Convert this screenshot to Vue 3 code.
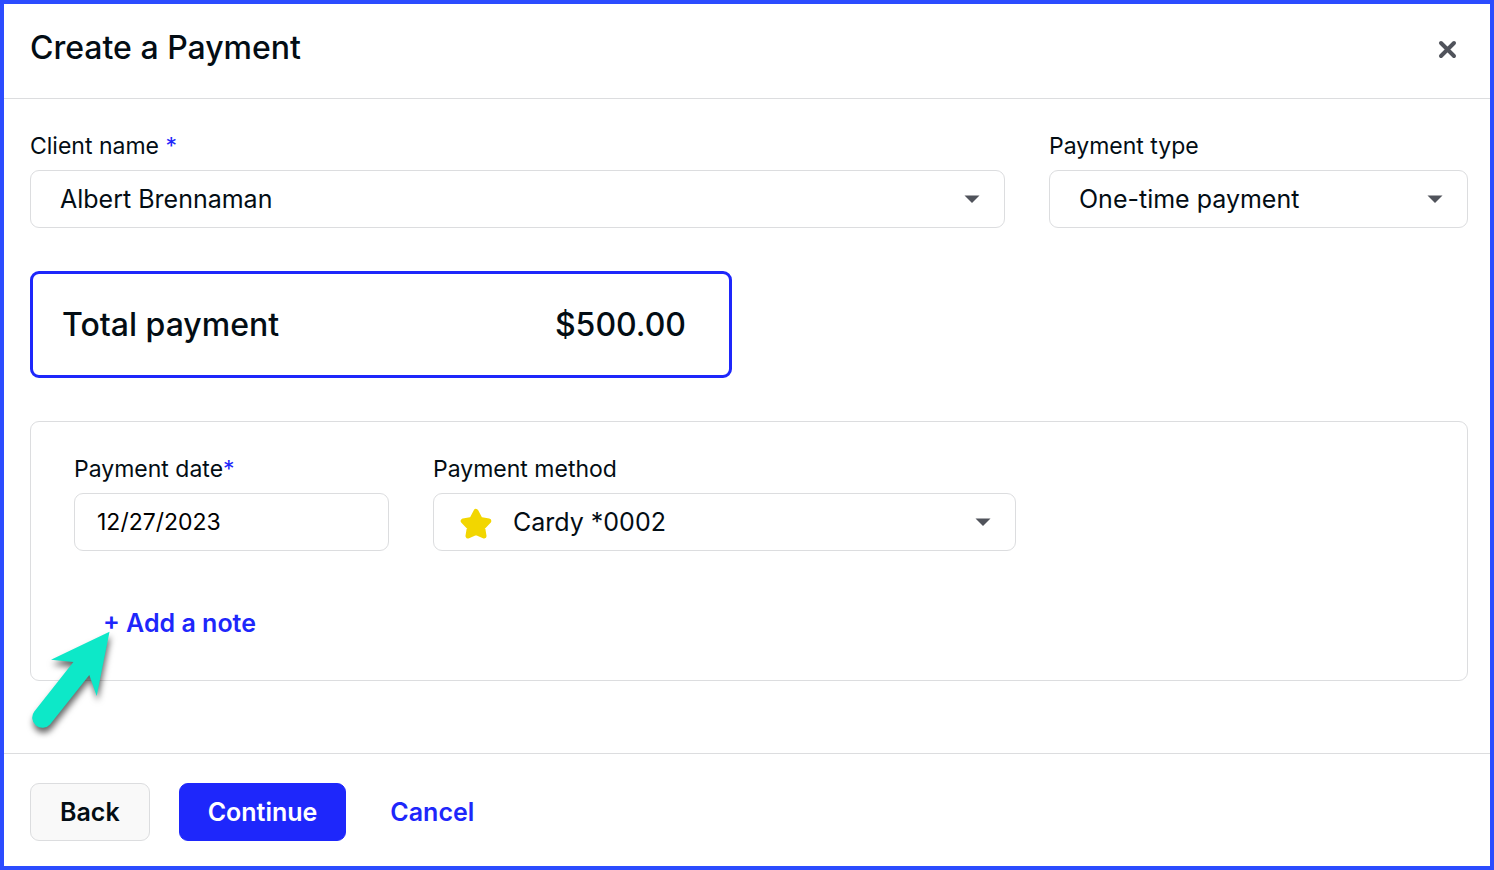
<script setup>
import { ref } from 'vue'

const client = ref('Albert Brennaman')
const paymentType = ref('One-time payment')
const paymentDate = ref('12/27/2023')
const paymentMethod = ref('Cardy *0002')
const total = '$500.00'
</script>

<template>
  <form class="dialog" @submit.prevent>
    <header class="header">
      <h1 class="title">Create a Payment</h1>
      <button class="close" type="button" aria-label="Close">
        <svg width="20" height="20" viewBox="0 0 20 20" aria-hidden="true">
          <path d="M4 4 L17 17 M17 4 L4 17" />
        </svg>
      </button>
    </header>

    <main class="body">
      <div class="row top-row">
        <div class="field">
          <label class="label" for="client">Client name <span class="required">*</span></label>
          <div class="control">
            <select id="client" v-model="client" class="input select">
              <option>Albert Brennaman</option>
            </select>
            <svg class="caret" width="16" height="8" viewBox="0 0 16 8" aria-hidden="true">
              <path d="M0.5 0.5 H15.5 L8 8 Z" />
            </svg>
          </div>
        </div>
        <div class="field">
          <label class="label" for="type">Payment type</label>
          <div class="control">
            <select id="type" v-model="paymentType" class="input select">
              <option>One-time payment</option>
            </select>
            <svg class="caret" width="16" height="8" viewBox="0 0 16 8" aria-hidden="true">
              <path d="M0.5 0.5 H15.5 L8 8 Z" />
            </svg>
          </div>
        </div>
      </div>

      <section class="total">
        <span>Total payment</span>
        <span>{{ total }}</span>
      </section>

      <section class="card">
        <div class="row card-row">
          <div class="field">
            <label class="label" for="date">Payment date<span class="required">*</span></label>
            <input id="date" v-model="paymentDate" class="input date" type="text" />
          </div>
          <div class="field">
            <label class="label" for="method">Payment method</label>
            <div class="control">
              <svg class="star" width="32" height="32" viewBox="0 0 32 32" aria-hidden="true">
                <path d="M16 3.4 L20.2 11.4 L28.8 13 L22.6 19.4 L24 28 L16 24.4 L8 28 L9.4 19.4 L3.2 13 L11.8 11.4 Z" />
              </svg>
              <select id="method" v-model="paymentMethod" class="input select with-icon">
                <option>Cardy *0002</option>
              </select>
              <svg class="caret" width="16" height="8" viewBox="0 0 16 8" aria-hidden="true">
                <path d="M0.5 0.5 H15.5 L8 8 Z" />
              </svg>
            </div>
          </div>
        </div>
        <button class="link note" type="button">+ Add a note</button>
        <svg class="pointer" width="110" height="130" viewBox="0 0 110 130" aria-hidden="true">
          <path d="M89.5 11.7 L31 39.7 L53.4 42 L14.3 91.4 A10.2 10.2 0 0 0 30 104.4 L69.3 55 L76.7 76 Z" />
        </svg>
      </section>
    </main>

    <footer class="footer">
      <button class="button back" type="button">Back</button>
      <button class="button continue" type="submit">Continue</button>
      <button class="link cancel" type="button">Cancel</button>
    </footer>
  </form>
</template>

<style>
body {
  margin: 0;
  background: #fff;
}
</style>

<style scoped>
.dialog,
.dialog * {
  box-sizing: border-box;
}

.dialog {
  display: flex;
  flex-direction: column;
  min-height: 100vh;
  border: 4px solid #2b4cff;
  background: #fff;
  color: #030d14;
  font-family: Inter, "Liberation Sans", sans-serif;
}

button,
input,
select {
  margin: 0;
  font-family: inherit;
  color: inherit;
}

button {
  cursor: pointer;
}

.header {
  display: flex;
  align-items: center;
  justify-content: space-between;
  padding: 24px 33px 30px 26px;
  border-bottom: 1px solid #dcdddf;
}

.title {
  margin: 0;
  font-size: 32px;
  line-height: 40px;
  font-weight: 500;
}

.close {
  display: flex;
  padding: 2px 0 0;
  border: 0;
  background: none;
}

.close path {
  fill: none;
  stroke: #50535b;
  stroke-width: 4;
  stroke-linecap: round;
}

.body {
  flex: 1;
  padding: 32px 22px 72px 26px;
}

.row {
  display: grid;
  gap: 44px;
}

.top-row {
  grid-template-columns: 975fr 419fr;
}

.card-row {
  grid-template-columns: 315fr 583fr 364fr;
}

.label {
  display: block;
  margin-bottom: 9px;
  font-size: 23px;
  line-height: 30px;
}

.required {
  color: #1e27fb;
}

.control {
  position: relative;
}

.input {
  display: block;
  width: 100%;
  height: 58px;
  border: 1px solid #dcdddf;
  border-radius: 9px;
  background: #fff;
  font-size: 25px;
}

.select {
  appearance: none;
  padding: 0 60px 0 29px;
}

.with-icon {
  padding-left: 79px;
}

.date {
  padding: 0 22px;
  font-size: 23px;
  color: #000;
}

.caret {
  position: absolute;
  right: 25px;
  top: 25px;
  fill: #50535b;
  pointer-events: none;
}

.star {
  position: absolute;
  left: 27px;
  top: 15px;
  pointer-events: none;
}

.star path {
  fill: #f2d600;
  stroke: #f2d600;
  stroke-width: 5;
  stroke-linejoin: round;
}

.total {
  display: flex;
  align-items: center;
  justify-content: space-between;
  width: calc(50% - 17px);
  margin-top: 43px;
  padding: 31px 43px 30px 29px;
  border: 3px solid #1e27fb;
  border-radius: 9px;
  font-size: 32px;
  line-height: 40px;
  font-weight: 500;
}

.card {
  position: relative;
  margin-top: 43px;
  padding: 32px 43px 40px;
  border: 1px solid #dcdddf;
  border-radius: 9px;
}

.link {
  border: 0;
  background: none;
  color: #1e27fb;
  font-size: 25px;
  line-height: 34px;
  font-weight: 600;
}

.note {
  display: block;
  margin-top: 55px;
  padding: 0 29px;
}

.pointer {
  position: absolute;
  left: -11px;
  bottom: -70px;
  fill: #0de8c8;
  filter: drop-shadow(1px 5px 3px rgba(0, 0, 0, 0.6));
  pointer-events: none;
}

.footer {
  display: flex;
  align-items: center;
  padding: 29px 26px 25px;
  border-top: 1px solid #dcdddf;
}

.button {
  height: 58px;
  margin-right: 29px;
  padding: 0 28px;
  border: 1px solid #1e27fb;
  border-radius: 9px;
  background: #1e27fb;
  color: #fff;
  font-size: 25px;
  font-weight: 600;
}

.back {
  padding: 0 29px;
  border-color: #dcdddf;
  background: #f9f9f9;
  color: #030d14;
}

.cancel {
  padding: 0 15px;
}
</style>
